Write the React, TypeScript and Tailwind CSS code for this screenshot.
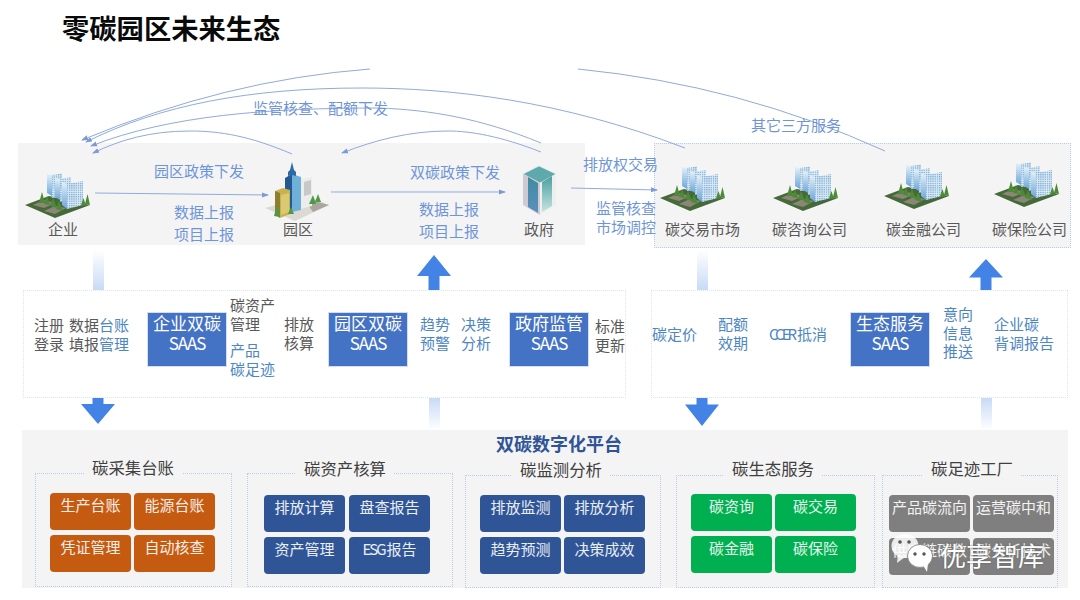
const blue = 'text-[#6f95d9]';

function Label({ className, children }: { className: string; children: React.ReactNode }) {
  return <div className={`absolute whitespace-nowrap text-[15px] leading-[20px] ${className}`}>{children}</div>;
}

// office block on a green lot, same picture everywhere it is used
function Campus({ className }: { className: string }) {
  return (
    <svg className={`absolute w-[65px] h-[47px] ${className}`} viewBox="0 0 65 47">
      <defs>
        <linearGradient id="slab" x1="0" y1="0" x2="0" y2="1">
          <stop offset="0" stopColor="#e4f1f8" />
          <stop offset="1" stopColor="#6aa6da" />
        </linearGradient>
        <pattern id="win" width="2.2" height="2.2" patternUnits="userSpaceOnUse">
          <rect width="2.2" height="2.2" fill="#d8eaf5" />
          <rect width="1.3" height="1.2" fill="#7fa9d2" />
        </pattern>
      </defs>
      <polygon points="0,33 24,24 65,33 30,46" fill="#46693a" />
      <polygon points="8,33 19,28 30,31 19,36" fill="#8d8578" />
      <polygon points="19,39 30,34 41,36 30,42" fill="#8d8578" />
      <polygon points="22,2 27,3 27,24 22,21" fill="url(#slab)" />
      <polygon points="27,3 37,1.5 37,24 27,26" fill="url(#win)" />
      <polygon points="30,6 35,7 35,28 30,25" fill="url(#slab)" />
      <polygon points="35,7 46,5 46,27 35,30" fill="url(#win)" />
      <polygon points="37,10 42,12 42,37 37,33" fill="url(#slab)" />
      <polygon points="42,12 58,9 58,33 42,37" fill="url(#win)" />
      <g fill="#4c8a37">
        <polygon points="14,31 17,20 20,31" />
        <polygon points="19,32 22,24 25,33" />
        <polygon points="25,34 28,26 32,36" />
        <polygon points="31,37 34,29 38,39" />
        <polygon points="60,32 62.5,22 65,33" />
        <polygon points="56,33 58.5,26 61,34" />
      </g>
    </svg>
  );
}

function Park({ className }: { className: string }) {
  return (
    <svg className={`absolute w-[65px] h-[60px] ${className}`} viewBox="0 0 65 60">
      <polygon points="0,46 42,34 64,43 30,59" fill="#dcd9d2" />
      <polygon points="38,36 64,43 48,50" fill="#a9a69d" />
      <polygon points="36,17 47,15 47,44 36,47" fill="#ececec" />
      <polygon points="39,20 46,18 46,32 39,34" fill="#c6c9c7" />
      <polygon points="20,16 27,12 27,50 20,46" fill="#245a94" />
      <polygon points="27,12 36,15 36,48 27,50" fill="#6fb0d8" />
      <polygon points="27,0 29,8 31,10 31,14 27,13 23,14 23,10 25,8" fill="#2d6ba6" />
      <polygon points="10,29 18,26 25,28 25,52 15,56 10,52" fill="#c8b24d" />
      <polygon points="10,29 15,31 15,56 10,52" fill="#8f7e2e" />
      <polygon points="16,33 24,31 24,50 16,53" fill="#d9c970" />
      <g fill="#4c9a46">
        <polygon points="9,54 12,43 15,55" />
        <polygon points="23,52 26,45 29,52" />
        <polygon points="44,42 48,33 51,42" />
        <polygon points="50,40 53,32 56,40" />
      </g>
    </svg>
  );
}

function Gov({ className }: { className: string }) {
  return (
    <svg className={`absolute w-[33px] h-[50px] ${className}`} viewBox="0 0 33 50">
      <defs>
        <linearGradient id="govl" x1="0" y1="0" x2="0" y2="1">
          <stop offset="0" stopColor="#3f8c9e" />
          <stop offset="1" stopColor="#5d8fc0" />
        </linearGradient>
        <linearGradient id="govr" x1="0" y1="0" x2="0" y2="1">
          <stop offset="0" stopColor="#4aa0a0" />
          <stop offset="1" stopColor="#c4e4e0" />
        </linearGradient>
      </defs>
      <polygon points="0,8 16,0 33,8 17,17" fill="#5fa9ad" stroke="#e8f2f2" strokeWidth="0.6" />
      <polygon points="0,8 17,17 17,49 0,39" fill="#cfc9d4" />
      <polygon points="5,11 15,17 15,47 5,41" fill="url(#govl)" />
      <polygon points="17,17 33,8 33,39 17,49" fill="#efefef" />
      <polygon points="19,16 29,10 29,40 19,46" fill="url(#govr)" />
    </svg>
  );
}

function GradBar({ className }: { className: string }) {
  return <div className={`w-[11px] bg-linear-to-b from-white to-[#c9daf6] ${className}`} />;
}

function BigArrow({ dir, className }: { dir: 'up' | 'down'; className: string }) {
  return (
    <svg className={`shrink-0 ${className}`} viewBox="0 0 34 35" preserveAspectRatio="none">
      {dir === 'up' ? (
        <polygon points="17,0 34,21 22.5,21 22.5,35 11.5,35 11.5,21 0,21" fill="#4483e6" />
      ) : (
        <polygon points="11.5,0 22.5,0 22.5,8 34,8 17,35 0,8 11.5,8" fill="#4483e6" />
      )}
    </svg>
  );
}

function Saas({ title, className }: { title: string; className: string }) {
  return (
    <div className={`w-[80px] h-[55px] mt-[21px] shrink-0 bg-[#4472c4] border border-[#d3def2] text-white text-center text-[17px] leading-[19.5px] ${className}`}>
      <div>{title}</div>
      <div className="tracking-[-1px]">SAAS</div>
    </div>
  );
}

function Col({ lines, className }: { lines: string[]; className: string }) {
  return (
    <div className={`shrink-0 text-[15px] leading-[18.5px] whitespace-nowrap ${className}`}>
      {lines.map((l) => <div key={l}>{l}</div>)}
    </div>
  );
}

const dark = 'text-[#595959]';
const mid = 'text-[#4d86c2]';

function Group({ title, titleClass, className, gridClass, cellClass, cells }: {
  title: string; titleClass: string; className: string; gridClass: string; cellClass: string; cells: React.ReactNode[];
}) {
  return (
    <div className={`relative shrink-0 border border-dotted border-[#b9cbe8] ${className}`}>
      <div className={`absolute bg-[#f4f4f4] px-[8px] text-[16.4px] leading-[24px] text-[#404040] whitespace-nowrap ${titleClass}`}>{title}</div>
      <div className={`grid grid-cols-2 ${gridClass}`}>
        {cells.map((c, i) => (
          <div key={i} className={`h-[37px] rounded-[4px] text-white/90 text-center text-[15px] leading-[20px] pt-[2px] whitespace-nowrap ${cellClass}`}>{c}</div>
        ))}
      </div>
    </div>
  );
}

export default function App() {
  return (
    <div className="relative w-[1080px] h-[600px] overflow-hidden bg-white font-['Noto_Sans_CJK_SC','Liberation_Sans',sans-serif]">
      <div className="h-[69px] pl-[62px] pt-[8px] text-[27.3px] leading-[38px] font-bold text-[#0a0a0a]">零碳园区未来生态</div>

      <div className="h-[181px] pt-[74px] flex items-start">
        <div className="relative ml-[18px] w-[567px] h-[102px] bg-[#f4f4f4]">
          <Campus className="left-[7px] top-[29px]" />
          <Park className="left-[247px] top-[19px]" />
          <Gov className="left-[505px] top-[23px]" />
          <Label className={`${dark} left-[30px] top-[76px]`}>企业</Label>
          <Label className={`${dark} left-[265px] top-[76px]`}>园区</Label>
          <Label className={`${dark} left-[506px] top-[76px]`}>政府</Label>
          <Label className={`${blue} left-[136px] top-[18px]`}>园区政策下发</Label>
          <Label className={`${blue} left-[156px] top-[59px]`}>数据上报</Label>
          <Label className={`${blue} left-[156px] top-[81px]`}>项目上报</Label>
          <Label className={`${blue} left-[392px] top-[19px]`}>双碳政策下发</Label>
          <Label className={`${blue} left-[401px] top-[56px]`}>数据上报</Label>
          <Label className={`${blue} left-[401px] top-[78px]`}>项目上报</Label>
          <Label className={`${blue} z-10 left-[565px] top-[11px]`}>排放权交易</Label>
          <Label className={`${blue} z-10 left-[578px] top-[55px]`}>监管核查</Label>
          <Label className={`${blue} z-10 left-[578px] top-[74px]`}>市场调控</Label>
        </div>
        <div className="relative ml-[69px] w-[417px] h-[105px] bg-[#f4f4f4] border border-dotted border-[#b9cbe8]">
          <Campus className="left-[5px] top-[21px]" />
          <Campus className="left-[118px] top-[21px]" />
          <Campus className="left-[229px] top-[19px]" />
          <Campus className="left-[339px] top-[17px]" />
          <Label className={`${dark} left-[10px] top-[75px]`}>碳交易市场</Label>
          <Label className={`${dark} left-[117px] top-[75px]`}>碳咨询公司</Label>
          <Label className={`${dark} left-[231px] top-[75px]`}>碳金融公司</Label>
          <Label className={`${dark} left-[337px] top-[75px]`}>碳保险公司</Label>
        </div>
      </div>

      <div className="h-[40px] flex items-end">
        <GradBar className="ml-[93px] h-[40px]" />
        <BigArrow dir="up" className="ml-[313px] w-[34px] h-[35px]" />
        <GradBar className="ml-[246px] h-[40px]" />
        <BigArrow dir="up" className="ml-[261px] w-[34px] h-[31px]" />
      </div>

      <div className="h-[108px] flex items-start">
        <div className="ml-[23px] w-[603px] h-[108px] flex items-start border border-dotted border-[#dfe5f0]">
          <Col lines={['注册', '登录']} className={`${dark} ml-[10px] mt-[25px]`} />
          <Col lines={['数据', '填报']} className={`${dark} ml-[5px] mt-[25px]`} />
          <Col lines={['台账', '管理']} className={`${mid} mt-[25px]`} />
          <Saas title="企业双碳" className="ml-[18px]" />
          <div className="ml-[3px] w-[45px] shrink-0">
            <Col lines={['碳资产', '管理']} className={`${dark} mt-[5px]`} />
            <Col lines={['产品', '碳足迹']} className={`${mid} mt-[8px]`} />
          </div>
          <Col lines={['排放', '核算']} className={`${dark} ml-[9px] mt-[24px]`} />
          <Saas title="园区双碳" className="ml-[14px]" />
          <Col lines={['趋势', '预警']} className={`${mid} ml-[12px] mt-[24px]`} />
          <Col lines={['决策', '分析']} className={`${mid} ml-[11px] mt-[24px]`} />
          <Saas title="政府监管" className="ml-[18px]" />
          <Col lines={['标准', '更新']} className={`${dark} ml-[6px] mt-[26px]`} />
        </div>
        <div className="ml-[25px] w-[417px] h-[108px] flex items-start border border-dotted border-[#dfe5f0]">
          <Col lines={['碳定价']} className={`${mid} mt-[34px]`} />
          <Col lines={['配额', '效期']} className={`${mid} ml-[21px] mt-[24px]`} />
          <div className={`shrink-0 ml-[21px] mt-[34px] w-[57px] text-[15px] leading-[18.5px] whitespace-nowrap ${mid}`}>
            <span className="tracking-[-3px]">CCER</span><span className="ml-[3px]">抵消</span>
          </div>
          <Saas title="生态服务" className="ml-[24px]" />
          <Col lines={['意向', '信息', '推送']} className={`${mid} ml-[13px] mt-[14px]`} />
          <Col lines={['企业碳', '背调报告']} className={`${mid} ml-[21px] mt-[24px]`} />
        </div>
      </div>

      <div className="h-[32px] flex items-start">
        <BigArrow dir="down" className="ml-[81px] w-[34px] h-[26px]" />
        <GradBar className="ml-[314px] h-[32px] rotate-180" />
        <BigArrow dir="down" className="ml-[245px] w-[34px] h-[28px]" />
        <GradBar className="ml-[262px] h-[32px] rotate-180" />
      </div>

      <div className="ml-[22px] w-[1046px] h-[158px] bg-[#f4f4f4]">
        <div className="h-[43px] pl-[474px] pt-[2px] text-[18px] leading-[22px] font-bold text-[#2f5597]">双碳数字化平台</div>
        <div className="flex items-start">
          <Group
            title="碳采集台账" titleClass="left-[48px] -top-[19px]" className="ml-[13px] w-[197px] h-[114px]"
            gridClass="gap-x-[3px] gap-y-[5px] pl-[14px] pt-[19px] w-[179px]" cellClass="bg-[#c55a11]"
            cells={['生产台账', '能源台账', '凭证管理', '自动核查']}
          />
          <Group
            title="碳资产核算" titleClass="left-[48px] -top-[18px]" className="ml-[15px] w-[206px] h-[114px]"
            gridClass="gap-x-[4px] gap-y-[5px] pl-[16px] pt-[21px] w-[182px]" cellClass="bg-[#2f5597]"
            cells={['排放计算', '盘查报告', '资产管理', <span key="esg"><span className="tracking-[-2px]">ESG</span><span className="ml-[2px]">报告</span></span>]}
          />
          <Group
            title="碳监测分析" titleClass="left-[46px] -top-[19px]" className="ml-[12px] mt-[2px] w-[196px] h-[113px]"
            gridClass="gap-x-[3px] gap-y-[5px] pl-[14px] pt-[19px] w-[179px]" cellClass="bg-[#2f5597]"
            cells={['排放监测', '排放分析', '趋势预测', '决策成效']}
          />
          <Group
            title="碳生态服务" titleClass="left-[47px] -top-[20px]" className="ml-[15px] mt-[2px] w-[199px] h-[113px]"
            gridClass="gap-x-[3px] gap-y-[5px] pl-[14px] pt-[18px] w-[179px]" cellClass="bg-[#00b050]"
            cells={['碳资询', '碳交易', '碳金融', '碳保险']}
          />
          <Group
            title="碳足迹工厂" titleClass="left-[40px] -top-[20px]" className="ml-[7px] mt-[2px] w-[176px] h-[113px]"
            gridClass="gap-x-[3px] gap-y-[6px] pl-[6px] pt-[19px] w-[171px]" cellClass="bg-[#7f7f7f]"
            cells={['产品碳流向', '运营碳中和', '供应链碳数', '碳分析技术']}
          />
        </div>
      </div>

      {/* connector lines over the nodes */}
      <svg className="absolute inset-0 w-[1080px] h-[600px] pointer-events-none" viewBox="0 0 1080 600" fill="none" stroke="#8fabdc" strokeWidth="1">
        <defs>
          <marker id="tip" markerWidth="7" markerHeight="6" refX="6" refY="3" orient="auto" markerUnits="userSpaceOnUse">
            <polygon points="0,0.5 7,3 0,5.5" fill="#7c9bd6" stroke="none" />
          </marker>
        </defs>
        <path d="M370 69 Q225 80 82 140" markerEnd="url(#tip)" />
        <path d="M578 69 Q740 85 885 151" />
        <path d="M685 148 C560 100 450 88 362 88 C250 88 160 105 86 142" markerEnd="url(#tip)" />
        <path d="M541 143 C480 118 430 110 379 108 C270 108 170 115 91 146" markerEnd="url(#tip)" />
        <path d="M292 154 C250 136 220 131 190 131 C150 131 120 140 93 153" markerEnd="url(#tip)" />
        <path d="M541 152 C500 136 470 131 448 131 C410 131 375 140 342 153" markerEnd="url(#tip)" />
        <path d="M95 193 L268 195" markerEnd="url(#tip)" />
        <path d="M331 192 L505 192" markerEnd="url(#tip)" />
        <path d="M571 188 L657 190" markerEnd="url(#tip)" />
      </svg>
      <Label className={`${blue} left-[253px] top-[98px] text-[15.1px]`}>监管核查、配额下发</Label>
      <Label className={`${blue} left-[751px] top-[115px]`}>其它三方服务</Label>

      {/* watermark */}
      <svg className="absolute left-[890px] top-[530px] w-[50px] h-[44px]" viewBox="0 0 50 44">
        <ellipse cx="15" cy="16" rx="13.5" ry="12" fill="#ffffff" fillOpacity="0.85" />
        <polygon points="8,25 7,33 15,27" fill="#ffffff" fillOpacity="0.85" />
        <circle cx="10" cy="12" r="1.8" fill="#555" />
        <circle cx="19" cy="12" r="1.8" fill="#555" />
        <ellipse cx="30" cy="26" rx="12.5" ry="11.5" fill="#ffffff" stroke="#777" strokeWidth="0.8" />
        <polygon points="33,35 37,42 38,33" fill="#ffffff" />
        <circle cx="25" cy="24" r="1.7" fill="#555" />
        <circle cx="34" cy="24" r="1.7" fill="#555" />
      </svg>
      <div className="absolute left-[940px] top-[537px] text-[26px] leading-[36px] text-white whitespace-nowrap [text-shadow:0_0_2px_#555]">优享智库</div>
    </div>
  );
}
